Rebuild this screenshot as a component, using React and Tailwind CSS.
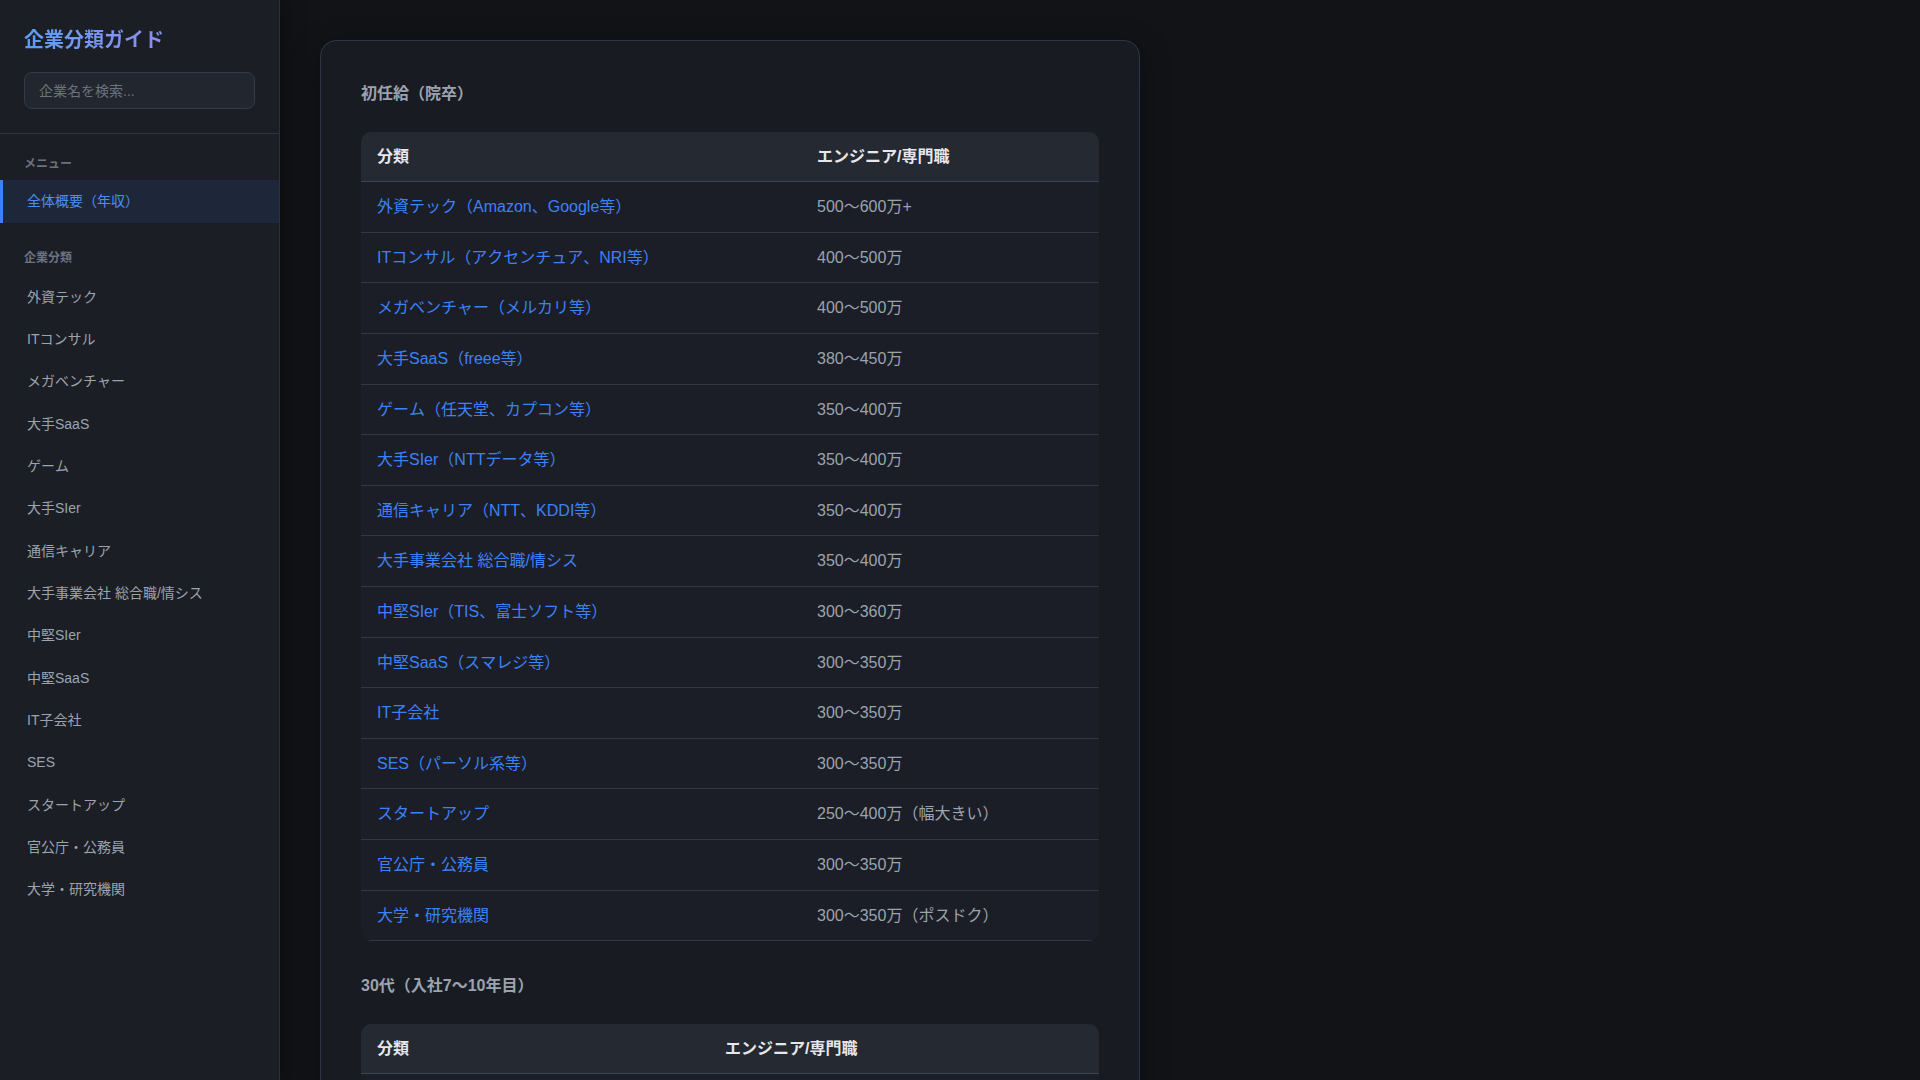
import React from 'react';

const FONT = { fontFamily: '"Liberation Sans", "Noto Sans CJK JP", sans-serif' };

const categories = [
  '外資テック',
  'ITコンサル',
  'メガベンチャー',
  '大手SaaS',
  'ゲーム',
  '大手SIer',
  '通信キャリア',
  '大手事業会社 総合職/情シス',
  '中堅SIer',
  '中堅SaaS',
  'IT子会社',
  'SES',
  'スタートアップ',
  '官公庁・公務員',
  '大学・研究機関',
];

const starting = [
  ['外資テック（Amazon、Google等）', '500〜600万+'],
  ['ITコンサル（アクセンチュア、NRI等）', '400〜500万'],
  ['メガベンチャー（メルカリ等）', '400〜500万'],
  ['大手SaaS（freee等）', '380〜450万'],
  ['ゲーム（任天堂、カプコン等）', '350〜400万'],
  ['大手SIer（NTTデータ等）', '350〜400万'],
  ['通信キャリア（NTT、KDDI等）', '350〜400万'],
  ['大手事業会社 総合職/情シス', '350〜400万'],
  ['中堅SIer（TIS、富士ソフト等）', '300〜360万'],
  ['中堅SaaS（スマレジ等）', '300〜350万'],
  ['IT子会社', '300〜350万'],
  ['SES（パーソル系等）', '300〜350万'],
  ['スタートアップ', '250〜400万（幅大きい）'],
  ['官公庁・公務員', '300〜350万'],
  ['大学・研究機関', '300〜350万（ポスドク）'],
];

const thirties = [
  ['外資テック', '1200〜2000万+'],
  ['ITコンサル', '800〜1200万'],
  ['メガベンチャー', '700〜1000万'],
  ['大手SaaS', '650〜900万'],
  ['ゲーム', '550〜800万'],
  ['大手SIer', '650〜850万'],
];

const SectionLabel = ({ children, className = '' }) => (
  <div className={`px-6 text-xs font-bold leading-[1.6] text-[#6b7280] ${className}`}>{children}</div>
);

const SalaryTable = ({ title, rows, firstCol }) => (
  <section>
    <h2 className="mb-[25px] text-base font-bold leading-[1.6] text-[#9ca3af]">{title}</h2>
    <div className="mb-8 overflow-hidden rounded-[10px] bg-[#1b1e26]">
      <table className="w-full border-collapse text-left text-base leading-[1.6]">
        <thead>
          <tr className="bg-[#252932]">
            <th className={`border-b border-[#3a4455] px-4 py-3 font-bold text-[#e5e7eb] ${firstCol}`}>分類</th>
            <th className="border-b border-[#3a4455] px-4 py-3 font-bold text-[#e5e7eb]">エンジニア/専門職</th>
          </tr>
        </thead>
        <tbody>
          {rows.map(([name, value]) => (
            <tr key={name}>
              <td className="border-b border-[#313844] px-4 py-3 text-[#3b82f6]">{name}</td>
              <td className="border-b border-[#313844] px-4 py-3 text-[#9ca3af]">{value}</td>
            </tr>
          ))}
        </tbody>
      </table>
    </div>
  </section>
);

export default function App() {
  return (
    <div
      className="flex h-screen overflow-hidden bg-[#111317] [font-kerning:none] [font-feature-settings:'chws'_0,'halt'_0,'kern'_0] [text-spacing-trim:space-all]"
      style={FONT}
    >
      <aside className="z-10 flex h-screen w-[280px] shrink-0 flex-col border-r border-[#2c313b] bg-[#1b1e25] shadow-[4px_0_20px_rgba(0,0,0,0.35)]">
        <div className="border-b border-[#2f3540] p-6">
          <h1 className="mb-4 inline-block bg-linear-to-r from-[#5b9df5] to-[#8b8ff0] bg-clip-text text-xl font-bold leading-[1.6] text-transparent">
            企業分類ガイド
          </h1>
          <input
            type="text"
            placeholder="企業名を検索..."
            className="h-[37px] w-full rounded-lg border border-[#323b4a] bg-[#22262e] px-[14px] text-sm text-[#d1d5db] placeholder:text-[#6b7280] focus:outline-none"
          />
        </div>
        <nav className="flex-1">
          <SectionLabel className="pb-[6px] pt-[21px]">メニュー</SectionLabel>
          <div className="border-l-[3px] border-[#3b82f6] bg-[#1e2739] py-[10px] pl-[24px] pr-6 text-sm leading-[22.4px] text-[#4a8ef2]">
            全体概要（年収）
          </div>
          <SectionLabel className="pb-2 pt-[26px]">企業分類</SectionLabel>
          {categories.map((c) => (
            <div
              key={c}
              className="border-l-[3px] border-transparent py-[10px] pl-[24px] pr-6 text-sm leading-[22.33px] text-[#9ca3af]"
            >
              {c}
            </div>
          ))}
        </nav>
      </aside>

      <main className="flex-1 overflow-y-auto p-10">
        <div className="w-[820px] rounded-2xl border border-[#2e3645] bg-[#181b22] p-10 shadow-[0_8px_30px_rgba(0,0,0,0.35)]">
          <SalaryTable title="初任給（院卒）" rows={starting} firstCol="w-[440px]" />
          <SalaryTable title="30代（入社7〜10年目）" rows={thirties} firstCol="w-[348px]" />
        </div>
      </main>
    </div>
  );
}
